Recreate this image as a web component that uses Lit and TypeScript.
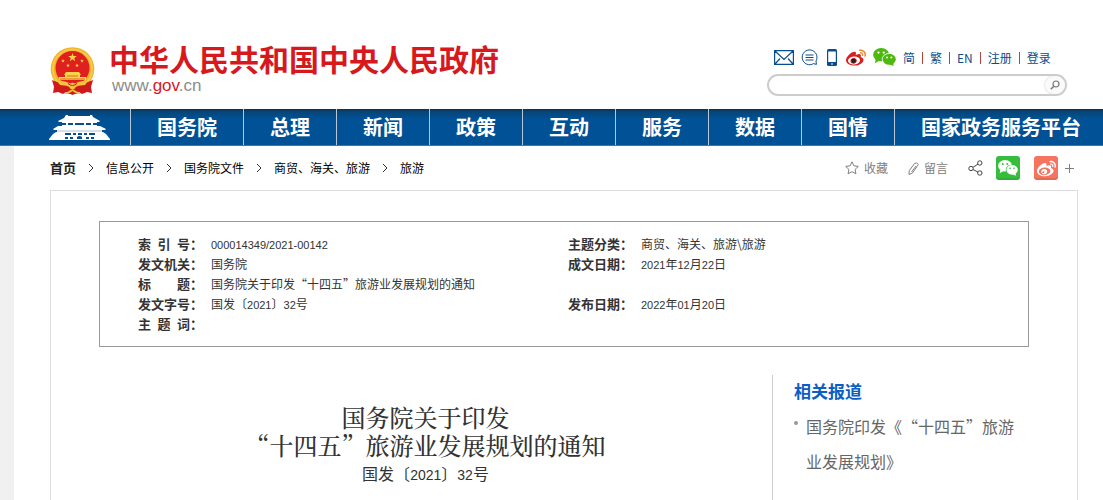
import { LitElement, html, svg, css } from "lit";
import { customElement } from "lit/decorators.js";

const NAV = ["国务院", "总理", "新闻", "政策", "互动", "服务", "数据", "国情", "国家政务服务平台"];
const CRUMBS = ["首页", "信息公开", "国务院文件", "商贸、海关、旅游", "旅游"];
const ACCOUNT = ["简", "繁", "EN", "注册", "登录"];
const INFO: [string, string, string, string][] = [
  ["索引号", "000014349/2021-00142", "主题分类", "商贸、海关、旅游\\旅游"],
  ["发文机关", "国务院", "成文日期", "2021年12月22日"],
  ["标题", "国务院关于印发“十四五”旅游业发展规划的通知", "", ""],
  ["发文字号", "国发〔2021〕32号", "发布日期", "2022年01月20日"],
  ["主题词", "", "", ""],
];

// Digits take a narrower Latin face than the Chinese text around them.
const mixed = (text: string) =>
  text.split(/([0-9][0-9/-]*)/).map((part) => (/^[0-9]/.test(part) ? html`<span class="num">${part}</span>` : part));

const star = (cx: number, cy: number, r: number) => {
  const pts = Array.from({ length: 10 }, (_, i) => {
    const a = (Math.PI * i) / 5 - Math.PI / 2;
    const q = i % 2 ? r * 0.4 : r;
    return `${(cx + q * Math.cos(a)).toFixed(2)},${(cy + q * Math.sin(a)).toFixed(2)}`;
  });
  return svg`<polygon points=${pts.join(" ")} />`;
};

const emblem = html`<svg width="46" height="48" viewBox="0 0 46 48" aria-hidden="true">
  <circle cx="22.5" cy="22" r="21.8" fill="#f0b32c" />
  <circle cx="22.5" cy="22" r="19.6" fill="none" stroke="#f7c945" stroke-width="2" />
  <path d="M2 33l5 2 8 2 7.500 4 7.500-4 8-2 5-2-2 7 1 6-5-1-5 2-3-2-6.500 3-6.500-3-3 2-5-2-5 1 1-6z" fill="#cf1a1c" />
  <circle cx="22.500" cy="21" r="17" fill="#e0201f" />
  <g fill="#fbd24a">
    ${star(22.5, 10.5, 4.6)} ${star(13, 14, 2)} ${star(32, 14, 2)} ${star(18, 18.5, 2)} ${star(27, 18.5, 2)}
    <path d="M16 25h13l2 3h-1v2h6v3H9v-3h6v-2h-1z" />
  </g>
  <path d="M17 29h11M10 32h25" stroke="#d9711c" stroke-width="1" />
  <path d="M7 34q7-1 15.500 4Q31 33 38 34l-3 4q-6 0-12.500 3Q16 38 10 38z" fill="#f6c23c" />
  <circle cx="22.500" cy="39" r="3.200" fill="#f6c23c" />
  <path d="M18 36.500q4.500 4 9 0" stroke="#cf1a1c" fill="none" />
  <path d="M14 47l8.500-5 8.500 5z" fill="#f6c23c" />
  <path d="M18 47l4.500-3 4.500 3z" fill="#cf1a1c" />
</svg>`;

const gate = html`<svg width="61" height="26" viewBox="0 0 61 26" aria-hidden="true">
  <g fill="#fff">
    <path d="M17 1h2v1h22V1h2l1 2 7 4-1 1H10L9 7l6-3z" />
    <path d="M13 8h35v4H13z" />
    <path d="M9 12h42l6 3-1 1H5l-1-1z" />
    <path d="M8 16h45v3H8z" />
    <path d="M4 20l3-2h47l3 2 4 5v1H0v-1z" />
  </g>
  <g fill="#04508f">
    <path d="M13 9h4v2h-4zM19 9h5v2h-5zM26 9h9v2h-9zM37 9h5v2h-5zM44 9h4v2h-4z" />
    <path d="M5 16.500h51v1H5z" opacity=".35" />
    <path d="M16 19h6v2h-6zM24 19h3v2h-3zM29 19h4v2h-4zM35 19h3v2h-3zM40 19h6v2h-6z" />
    <path d="M16 25v-2h3v2zM21 25v-2h3v2zM28 25v-2q2.500-2 5 0v2zM37 25v-2h3v2zM42 25v-2h3v2z" />
  </g>
</svg>`;

const WEIBO_BODY =
  "M10.098 20.323c-3.977.391-7.414-1.406-7.672-4.02-.259-2.609 2.759-5.047 6.74-5.441 3.979-.394 7.413 1.404 7.671 4.018.259 2.6-2.759 5.049-6.737 5.439l-.002.004zM9.05 17.219c-.384.616-1.208.884-1.829.602-.612-.279-.793-.991-.406-1.593.379-.595 1.176-.861 1.793-.601.622.263.82.972.442 1.592zm1.27-1.627c-.141.237-.449.353-.689.253-.236-.09-.313-.361-.177-.586.138-.227.436-.346.672-.24.239.09.315.36.18.601l.014-.028zm.176-2.719c-1.893-.493-4.033.45-4.857 2.118-.836 1.704-.026 3.591 1.886 4.21 1.983.64 4.318-.341 5.132-2.179.8-1.793-.201-3.642-2.161-4.149zm7.563-1.224c-.346-.105-.57-.18-.405-.615.375-.977.42-1.804 0-2.404-.781-1.112-2.915-1.053-5.364-.03 0 0-.766.331-.571-.271.376-1.217.315-2.224-.27-2.809-1.338-1.337-4.869.045-7.888 3.08C1.309 10.87 0 13.273 0 15.348c0 3.981 5.099 6.395 10.086 6.395 6.536 0 10.888-3.801 10.888-6.82 0-1.822-1.547-2.854-2.915-3.284v.01z";
const WEIBO_WAVES =
  "M19.967 6.557c-.766-.856-1.908-1.187-2.96-.962-.436.09-.706.511-.616.932.09.42.511.691.932.602.511-.105 1.067.044 1.442.465.376.421.466.977.316 1.473-.136.406.089.856.51.992.405.119.857-.105.992-.512.33-1.021.12-2.178-.646-3.035l.03.045zm2.418-2.195c-1.576-1.757-3.905-2.419-6.054-1.968-.496.104-.812.587-.706 1.081.104.496.586.813 1.082.707 1.532-.331 3.185.15 4.296 1.383 1.112 1.246 1.429 2.943.947 4.416-.165.48.106 1.007.586 1.157.479.165.991-.104 1.157-.586.675-2.088.241-4.478-1.338-6.235l.03.045z";

const weibo = (size: number, body: string, waves: string) => html`<svg width=${size} height=${size} viewBox="0 1 24 22" aria-hidden="true">
  <path d=${WEIBO_BODY} fill=${body} /><path d=${WEIBO_WAVES} fill=${waves} />
</svg>`;

const wechat = (width: number, fill: string, hole: string) => html`<svg width=${width} viewBox="0 0 24 19" aria-hidden="true">
  <g fill=${fill}>
    <ellipse cx="8.500" cy="7" rx="8.400" ry="6.900" />
    <path d="M3 11l-1 5 5-3z" />
  </g>
  <ellipse cx="16.800" cy="11.800" rx="7.600" ry="6.500" fill=${hole} />
  <g fill=${fill}>
    <ellipse cx="16.900" cy="11.800" rx="6.900" ry="5.800" />
    <path d="M17 17l4.500 1.900-.5-4z" />
  </g>
  <g fill=${hole}>
    <circle cx="5.700" cy="4.800" r="1.200" /><circle cx="11.200" cy="4.800" r="1.200" />
    <circle cx="14.600" cy="10" r="1" /><circle cx="19.200" cy="10" r="1" />
  </g>
</svg>`;

@customElement("app-root")
export class AppRoot extends LitElement {
  static styles = css`
    :host {
      display: flex;
      flex-direction: column;
      min-height: 100vh;
      background: #fff;
      color: #333;
      font: 12px/20px "Noto Sans CJK SC", "Noto Sans", sans-serif;
      text-spacing-trim: space-all;
    }
    a { color: inherit; text-decoration: none; }
    svg { display: block; flex: none; }
    ul, ol { list-style: none; margin: 0; padding: 0; }
    button { border: 0; padding: 0; background: none; color: inherit; font: inherit; cursor: pointer; }
    .num { font-family: "Liberation Sans", sans-serif; font-size: 11px; line-height: 1; }

    .header {
      display: flex;
      justify-content: space-between;
      align-items: flex-start;
      padding: 44px 36px 13px 50px;
    }
    .brand { display: flex; gap: 13px; align-items: flex-start; }
    .brand svg { margin-top: 3px; }
    .name { margin: 0; color: #d7191d; font: 700 30px/34px "Liberation Sans", "Noto Sans CJK SC", sans-serif; white-space: nowrap; }
    .domain { padding-left: 3px; font: 17px/16px "Liberation Sans", sans-serif; color: #8c8c8c; }
    .domain b { color: #d7191d; font-weight: 400; }

    .utility { width: 300px; }
    .links { display: flex; align-items: center; height: 27px; padding-left: 7px; color: #0a4d8c; }
    .icons { display: flex; align-items: center; gap: 7px; margin-right: 7px; }
    .icons a:nth-child(3) { margin: 0 2px; }
    .account { display: flex; align-items: center; }
    .account li + li { border-left: 1px solid #b5443c; margin-left: 7px; padding-left: 7px; }
    .account li { line-height: 12px; white-space: nowrap; }
    .search {
      display: flex;
      box-sizing: border-box;
      height: 22px;
      margin-top: 3px;
      border: 2px solid #ccc;
      border-radius: 11px;
      overflow: hidden;
    }
    .search input { flex: 1; min-width: 0; border: 0; outline: 0; padding: 0 10px; background: none; font: inherit; }
    .search button { width: 20px; border-radius: 10px; background: #fafafa; box-shadow: 0 0 1px 1px #e8e8e8; display: grid; place-items: center; }

    .nav {
      display: flex;
      height: 37px;
      box-sizing: border-box;
      padding-left: 50px;
      border-bottom: 1px solid #3b78ad;
      background: linear-gradient(#10314d, #064679 3px, #005195 10px);
      color: #fff;
      font-size: 20px;
      line-height: 36px;
      font-weight: 700;
      white-space: nowrap;
    }
    .nav a { padding: 0 26px; border-left: 1px solid #b9c6d3; }
    .nav .home { border: 0; padding: 5px 20px 0 0; margin-left: -1px; }

    .page { flex: 1; display: flex; flex-direction: column; border-left: 14px solid #f0f0f0; padding: 0 25px 0 36px; }
    .bar { display: flex; justify-content: space-between; align-items: center; height: 44px; color: #000; }
    .crumbs { display: flex; align-items: center; }
    .crumbs li { display: flex; align-items: center; }
    .crumbs li:first-child { font-weight: 700; font-size: 13px; color: #222; }
    .crumbs svg { margin: 0 12px; }
    .tools { display: flex; align-items: center; color: #808080; padding-right: 3px; }
    .tools button { display: flex; align-items: center; gap: 5px; }
    .fav, .msg { margin-right: 20px; }
    .share { margin-right: 13px; }
    .tools .tile { width: 24px; height: 24px; border-radius: 3px; justify-content: center; box-shadow: inset 0 -2px 0 rgba(0, 0, 0, .08); }
    .tools .green { background: #35bd3c; margin-right: 14px; }
    .tools .coral { background: #f5735f; margin-right: 6px; }

    .panel { flex: 1; display: flex; flex-direction: column; border: 1px solid #ddd; border-bottom: 0; padding: 30px 48px 0; }
    .info { border: 1px solid #999; padding: 12px 30px 12px 38px; }
    .info table { width: 100%; border-collapse: collapse; table-layout: fixed; }
    .info th, .info td { padding: 0; height: 20px; text-align: left; vertical-align: top; white-space: nowrap; }
    .info th { width: 73px; font-size: 13px; }
    .term, .value { display: flex; align-items: center; height: 20px; overflow: visible; }
    .term { line-height: 18px; }
    .label { width: 52px; text-align-last: justify; }

    .body { flex: 1; display: flex; gap: 20px; margin-top: 28px; }
    .main { flex: 1; padding-top: 28px; text-align: center; line-height: 28px; }
    .main h1 { margin: 0; font: 500 24px/28px "Noto Serif CJK SC", "Noto Sans CJK SC", serif; }
    .main p { margin: 0; font-size: 16px; }
    .main .num { font-size: 14px; }
    .side { width: 235px; border-left: 1px solid #ccc; padding: 6px 0 0 21px; }
    .side h2 { margin: 0 0 8px; color: #0b5fc4; font-size: 17px; line-height: 20px; }
    .side li { display: flex; gap: 8px; color: #666; font-size: 16px; line-height: 35px; }
    .side li::before { content: ""; flex: none; width: 4px; height: 4px; margin-top: 12px; border-radius: 50%; background: #999; }
  `;

  render() {
    return html`
      <header class="header">
        <a class="brand" href="#">
          ${emblem}
          <div>
            <h1 class="name">中华人民共和国中央人民政府</h1>
            <div class="domain">www.<b>gov</b>.cn</div>
          </div>
        </a>
        <div class="utility">
          <div class="links">
            <div class="icons">
              <a href="#" aria-label="邮箱"><svg width="20" height="15" viewBox="0 0 20 15" fill="none" stroke="#0a4d8c" stroke-width="1.200"><path d="M.6.600h18.800v13.800H.600zM1 1l9 8.500L19 1M1 14l5-5.500M19 14l-5-5.500" /></svg></a>
              <a href="#" aria-label="留言"><svg width="17" height="17" viewBox="0 0 17 17" fill="none" stroke="#0a4d8c" stroke-width="1"><path d="M12.500 14.600A7.400 7.400 0 1 1 15 12l.4 3.400zM4.500 6h8M4.500 8.500h8M4.500 11h8" /></svg></a>
              <a href="#" aria-label="手机"><svg width="10" height="17" viewBox="0 0 10 17"><rect width="10" height="17" rx="1.500" fill="#0a4d8c" /><path d="M1.200 2.500h7.600v10.500H1.200z" fill="#fff" /><path d="M4 15h2" stroke="#fff" /></svg></a>
              <a href="#" aria-label="微博"><svg width="20" height="19" viewBox="0 1 24 22"><ellipse cx="9.600" cy="15.600" rx="7.500" ry="5" fill="#fff" /><path d=${WEIBO_BODY} fill="#d8201f" /><circle cx="9" cy="16" r="2.800" fill="#222" /><path d=${WEIBO_WAVES} fill="#ef8a2c" /></svg></a>
              <a href="#" aria-label="微信">${wechat(23, "#4fb810", "#fff")}</a>
            </div>
            <ul class="account">${ACCOUNT.map((t) => html`<li><a href="#">${t}</a></li>`)}</ul>
          </div>
          <form class="search">
            <input type="search" aria-label="搜索" />
            <button type="button" aria-label="搜索"><svg width="10" height="10" viewBox="0 0 10 10" fill="none" stroke="#777" stroke-width="1.200"><circle cx="6" cy="4" r="3" /><path d="M3.800 6.200L.8 9.200" stroke-width="1.500" /></svg></button>
          </form>
        </div>
      </header>
      <nav class="nav">
        <a class="home" href="#" aria-label="首页">${gate}</a>
        ${NAV.map((t) => html`<a href="#">${t}</a>`)}
      </nav>
      <div class="page">
        <div class="bar">
          <ol class="crumbs">
            ${CRUMBS.map((t, i) => html`<li>${i ? html`<svg width="6" height="10" viewBox="0 0 6 10" fill="none" stroke="#333"><path d="M1 1l4 4-4 4" /></svg>` : ""}<a href="#">${t}</a></li>`)}
          </ol>
          <div class="tools">
            <button class="fav"><svg width="14" height="14" viewBox="0 0 14 14" fill="none" stroke="#808080" stroke-linejoin="round"><path d="M7 .8l1.900 4 4.400.6-3.200 3 .8 4.400L7 10.700l-3.900 2.100.8-4.400-3.200-3 4.400-.6z" /></svg>收藏</button>
            <button class="msg"><svg width="11" height="13" viewBox="0 0 11 13" fill="none" stroke="#808080" stroke-linejoin="round"><path d="M6.500 1.500Q9-.2 10.300 2.500L4.500 11 1 12.500 1.200 8.800zM8 4L3.500 10" /></svg>留言</button>
            <button class="share" aria-label="分享"><svg width="15" height="16" viewBox="0 0 15 16" fill="none" stroke="#444"><circle cx="3" cy="8.500" r="2.200" /><circle cx="11.800" cy="3" r="2.200" /><circle cx="11.800" cy="13" r="2.200" /><path d="M5 7.300l5-3.200M5 9.500l5 2.600" /></svg></button>
            <button class="tile green" aria-label="微信">${wechat(20, "#fff", "#35bd3c")}</button>
            <button class="tile coral" aria-label="微博">${weibo(19, "#fff", "#fff")}</button>
            <button aria-label="更多"><svg width="11" height="11" viewBox="0 0 11 11" stroke="#808080"><path d="M5.500 1v9M1 5.500h9" /></svg></button>
          </div>
        </div>
        <section class="panel">
          <div class="info">
            <table>
              ${INFO.map(
                ([a, b, c, d]) => html`<tr>
                  <th scope="row"><div class="term"><span class="label">${a}</span>：</div></th>
                  <td><div class="value"><span>${mixed(b)}</span></div></td>
                  ${c
                    ? html`<th scope="row"><div class="term"><span class="label">${c}</span>：</div></th><td><div class="value"><span>${mixed(d)}</span></div></td>`
                    : html`<td></td><td></td>`}
                </tr>`
              )}
            </table>
          </div>
          <div class="body">
            <article class="main">
              <h1>国务院关于印发<br />“十四五”旅游业发展规划的通知</h1>
              <p>${mixed("国发〔2021〕32号")}</p>
            </article>
            <aside class="side">
              <h2>相关报道</h2>
              <ul><li><a href="#">国务院印发《“十四五”旅游业发展规划》</a></li></ul>
            </aside>
          </div>
        </section>
      </div>
    `;
  }
}
